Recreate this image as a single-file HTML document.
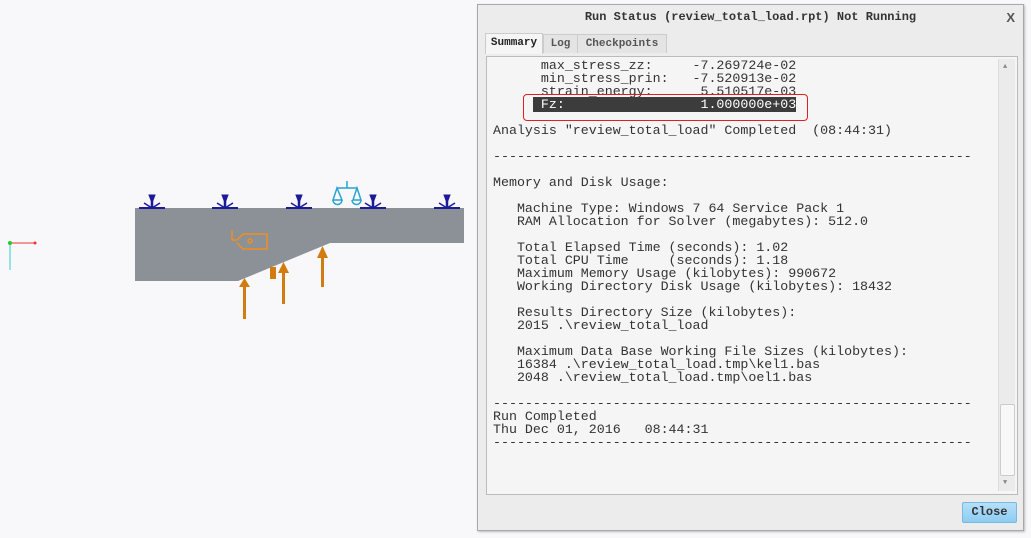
<!DOCTYPE html><html><head><style>
body{margin:0;width:1031px;height:538px;background:#f8f8fb;position:relative;overflow:hidden;font-family:"Liberation Mono",monospace}
.dlg{position:absolute;left:477px;top:4px;width:545px;height:525px;background:#ececec;border:1px solid #a8a8a8;box-shadow:1px 1px 2px #bbb}
.title{position:absolute;left:0;top:0;width:100%;height:25px;text-align:center;font:bold 12px "Liberation Mono",monospace;line-height:25px;color:#333}
.x{position:absolute;right:8px;top:0;font:bold 13px "Liberation Sans";line-height:25px;color:#555}
.tab{position:absolute;top:29px;height:18px;font:bold 11px "Liberation Mono",monospace;line-height:18px;color:#555;border:1px solid #ccc;border-bottom:none;background:#e4e4e4;text-align:center}
.box{position:absolute;left:8px;top:51px;width:530px;height:437px;background:#f5f5f5;border:1px solid #bbb}
pre{position:absolute;left:6px;top:2px;margin:0;font:13.3px/13px "Liberation Mono",monospace;color:#333}
.hl{background:#3c3c3c;color:#fff}
.sb{position:absolute;right:2px;top:2px;width:16px;height:432px;background:#ebebeb;border-left:1px solid #ddd}
.thumb{position:absolute;left:1px;top:345px;width:13px;height:70px;background:#f8f8f8;border:1px solid #ccc;border-radius:2px}
.btn{position:absolute;left:484px;top:497px;width:53px;height:19px;background:linear-gradient(#b5e0f8,#8dcdf2);border:1px solid #7ab8e0;border-radius:2px;font:bold 12px "Liberation Mono",monospace;line-height:19px;text-align:center;color:#333}
</style></head><body>
<svg width="470" height="330" style="position:absolute;left:0;top:0">
<line x1="10" y1="243" x2="36" y2="243" stroke="#e33" stroke-width="1"/><line x1="10" y1="243" x2="10" y2="270" stroke="#3cc" stroke-width="1"/><circle cx="10" cy="243" r="2" fill="#2c2"/><circle cx="35" cy="243" r="1.5" fill="#e33"/>
<polygon points="135,208 464,208 464,243 330,243 238,281 135,281" fill="#8c9097"/>
<g stroke="#1a1a9a" stroke-width="2.5" fill="#1a1a9a">
<g id="c"><line x1="152" y1="195" x2="152" y2="208"/><polygon points="149,195 155,195 152,203" stroke-width="1"/><line x1="139" y1="208" x2="165" y2="208" stroke-width="2"/><line x1="144" y1="203" x2="152" y2="208" stroke-width="1.5"/><line x1="160" y1="203" x2="152" y2="208" stroke-width="1.5"/></g>
<use href="#c" x="73"/><use href="#c" x="147"/><use href="#c" x="221"/><use href="#c" x="295"/></g>
<g stroke="#29a3d0" stroke-width="1.5" fill="none"><line x1="347" y1="181" x2="347" y2="188"/><line x1="337" y1="188" x2="357" y2="188"/><path d="M337 188 L333 200 L342 200 Z M357 188 L353 200 L361 200 Z"/><path d="M333 200 A4 4 0 0 0 342 200 M352 200 A4 4 0 0 0 361 200"/></g>
<g stroke="#f0901a" stroke-width="1.5" fill="none"><path d="M232 230 V240 H237 L243 234 H267 V249 H243 L237 243"/><circle cx="250" cy="241" r="2"/></g>
<g fill="#d27c10"><rect x="243" y="285" width="3" height="34"/><polygon points="239,287 244.5,278 250,287"/><rect x="282" y="270" width="3" height="34"/><polygon points="278,273 283.5,262 289,273"/><rect x="321" y="255" width="3" height="32"/><polygon points="317,258 322.5,246 328,258"/><rect x="270" y="267" width="6" height="12"/></g>
</svg>
<div class="dlg">
<div class="title">Run Status (review_total_load.rpt) Not Running</div><div class="x">X</div>
<div class="tab" style="left:7px;top:28px;width:56px;background:#f5f5f5;color:#222;height:20px">Summary</div>
<div class="tab" style="left:65px;width:33px">Log</div>
<div class="tab" style="left:99px;width:88px">Checkpoints</div>
<div class="box"><pre>      max_stress_zz:     -7.269724e-02
      min_stress_prin:   -7.520913e-02
      strain_energy:      5.510517e-03
     <span class="hl"> Fz:                 1.000000e+03</span>

Analysis "review_total_load" Completed  (08:44:31)

------------------------------------------------------------

Memory and Disk Usage:

   Machine Type: Windows 7 64 Service Pack 1
   RAM Allocation for Solver (megabytes): 512.0

   Total Elapsed Time (seconds): 1.02
   Total CPU Time     (seconds): 1.18
   Maximum Memory Usage (kilobytes): 990672
   Working Directory Disk Usage (kilobytes): 18432

   Results Directory Size (kilobytes):
   2015 .\review_total_load

   Maximum Data Base Working File Sizes (kilobytes):
   16384 .\review_total_load.tmp\kel1.bas
   2048 .\review_total_load.tmp\oel1.bas

------------------------------------------------------------
Run Completed
Thu Dec 01, 2016   08:44:31
------------------------------------------------------------</pre>
<div style="position:absolute;left:36px;top:37px;width:283px;height:25px;border:1px solid #e02020;border-radius:4px"></div>
<div class="sb"><div class="thumb"></div><div style="position:absolute;top:4px;left:4px;font-size:7px;color:#888">▲</div><div style="position:absolute;bottom:4px;left:4px;font-size:7px;color:#888">▼</div></div>
</div>
<div class="btn">Close</div>
</div>
</body></html>
